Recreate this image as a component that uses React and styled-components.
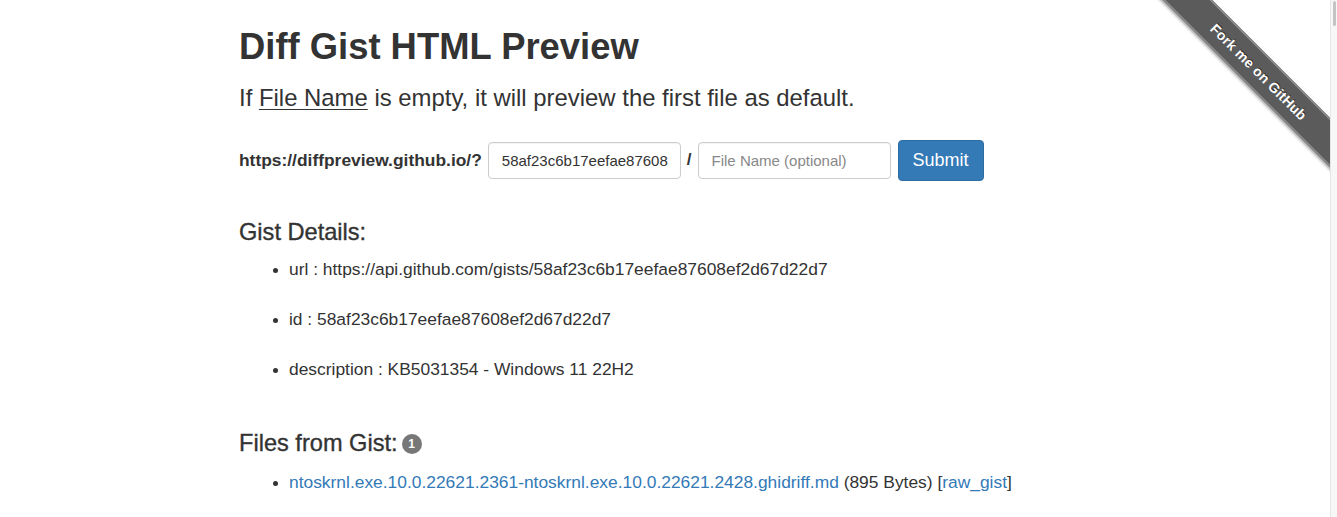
import React from "react";
import styled, { createGlobalStyle } from "styled-components";

const GlobalStyle = createGlobalStyle`
  html, body {
    margin: 0;
    padding: 0;
    background: #fff;
  }
  body {
    font-family: "Liberation Sans", Arial, Helvetica, sans-serif;
    font-size: 16px;
    color: #333;
  }
`;

const Page = styled.div`
  position: relative;
  min-height: 517px;
  overflow: hidden;
`;

const Container = styled.div`
  padding: 27px 0 0 239px;
`;

const Title = styled.h1`
  margin: 0 0 16px;
  font-size: 36.4px;
  line-height: 39.6px;
  font-weight: bold;
`;

const Lead = styled.p`
  margin: 0 0 28px;
  font-size: 23.9px;
  line-height: 29px;
  font-weight: 300;

  u {
    text-underline-offset: 3px;
    text-decoration-thickness: 1px;
  }
`;

const FormRow = styled.form`
  display: flex;
  align-items: center;
  height: 41px;
  margin-bottom: 39px;
`;

const Label = styled.label`
  font-size: 17.4px;
  font-weight: bold;
  margin-right: 6px;
  white-space: nowrap;
`;

const Slash = styled.span`
  font-size: 17px;
  font-weight: bold;
  margin: 0 6px 0 6px;
`;

const Input = styled.input`
  box-sizing: border-box;
  width: ${(p) => p.$width}px;
  height: 37px;
  padding: 6px 12px 6px 13px;
  border: 1px solid #ccc;
  border-radius: 4px;
  font-family: inherit;
  font-size: 15px;
  color: #333;
  box-shadow: inset 0 1px 1px rgba(0, 0, 0, 0.05);

  &::placeholder {
    color: #888;
  }
`;

const Button = styled.button`
  box-sizing: border-box;
  width: 86px;
  height: 41px;
  margin-left: 7px;
  padding: 0;
  background: #337ab7;
  border: 1px solid #2e6da4;
  border-radius: 4px;
  color: #fff;
  font-family: inherit;
  font-size: 18px;
`;

const SectionTitle = styled.h3`
  display: flex;
  align-items: center;
  gap: 4px;
  margin: 0;
  font-size: 23.6px;
  line-height: 24px;
  font-weight: 500;
  -webkit-text-stroke: 0.35px #333;
`;

const Badge = styled.span`
  display: inline-block;
  min-width: 20px;
  height: 20px;
  border-radius: 10px;
  background: #777;
  color: #fff;
  font-size: 12px;
  font-weight: bold;
  line-height: 20px;
  text-align: center;
  margin-top: 3px;
  -webkit-text-stroke: 0;
`;

const List = styled.ul`
  margin: 0;
  padding: 0 0 0 50px;
  padding-top: ${(p) => p.$top}px;
  padding-bottom: ${(p) => p.$bottom}px;
`;

const Item = styled.li`
  font-size: 17.4px;
  line-height: 20px;
  margin-bottom: ${(p) => p.$gap || 0}px;

  &::marker {
    font-size: 15px;
  }
`;

const Link = styled.a`
  color: #337ab7;
  text-decoration: none;
`;

const RibbonBox = styled.div`
  position: absolute;
  top: 0;
  right: 7px;
  width: 180px;
  height: 180px;
  overflow: hidden;
  pointer-events: none;
`;

const Ribbon = styled.a`
  position: absolute;
  left: -41px;
  top: 54px;
  width: 300px;
  height: 35px;
  box-sizing: border-box;
  transform: rotate(45deg);
  background: #5b5b5b;
  border-top: 2px solid #8a8a8a;
  border-bottom: 2px solid #8a8a8a;
  box-shadow: 0 2px 3px rgba(0, 0, 0, 0.35);
  display: flex;
  align-items: center;
  justify-content: center;
  color: #fff;
  font-size: 14px;
  font-weight: bold;
  text-decoration: none;
  text-shadow: 0 -1px 0 rgba(0, 0, 0, 0.6);
  letter-spacing: 0.2px;
`;

const Scrollbar = styled.div`
  position: absolute;
  top: 0;
  right: 0;
  width: 6px;
  height: 100%;
  background: #f7f7f7;
  border-left: 1px solid #e6e6e6;
`;

const Thumb = styled.div`
  margin: 1px 0 0 2px;
  width: 3px;
  height: 25px;
  border-radius: 2px;
  background: #c4c4c4;
`;

export default function App() {
  return (
    <Page>
      <GlobalStyle />
      <Container>
        <Title>Diff Gist HTML Preview</Title>
        <Lead>
          If <u>File Name</u> is empty, it will preview the first file as default.
        </Lead>
        <FormRow onSubmit={(e) => e.preventDefault()}>
          <Label>https://diffpreview.github.io/?</Label>
          <Input $width={193} defaultValue="58af23c6b17eefae87608ef2d67d22d7" />
          <Slash>/</Slash>
          <Input $width={193} placeholder="File Name (optional)" />
          <Button type="submit">Submit</Button>
        </FormRow>

        <SectionTitle>Gist Details:</SectionTitle>
        <List $top={15} $bottom={52}>
          <Item $gap={30}>url : https://api.github.com/gists/58af23c6b17eefae87608ef2d67d22d7</Item>
          <Item $gap={30}>id : 58af23c6b17eefae87608ef2d67d22d7</Item>
          <Item>description : KB5031354 - Windows 11 22H2</Item>
        </List>

        <SectionTitle>
          Files from Gist: <Badge>1</Badge>
        </SectionTitle>
        <List $top={17} $bottom={0}>
          <Item>
            <Link href="#">ntoskrnl.exe.10.0.22621.2361-ntoskrnl.exe.10.0.22621.2428.ghidriff.md</Link>{" "}
            (895 Bytes) [<Link href="#">raw_gist</Link>]
          </Item>
        </List>
      </Container>

      <RibbonBox>
        <Ribbon href="#">Fork me on GitHub</Ribbon>
      </RibbonBox>
      <Scrollbar>
        <Thumb />
      </Scrollbar>
    </Page>
  );
}
